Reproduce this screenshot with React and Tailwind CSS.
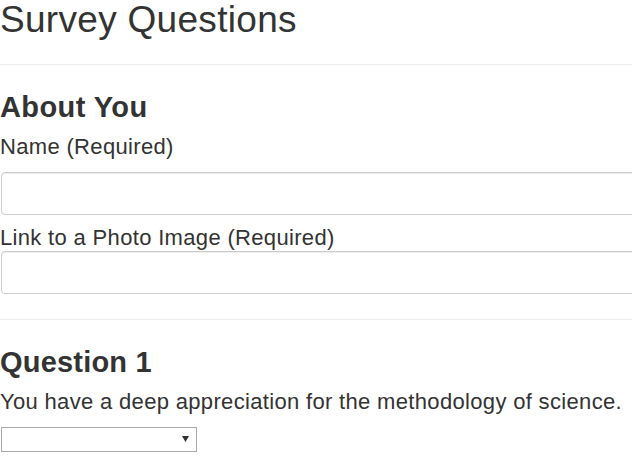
export default function App() {
    return (
        <div className="w-[632px] h-[464px] overflow-hidden bg-white">
            <div className="w-[700px] text-[#333] font-['Liberation_Sans',Arial,sans-serif]">
                <h1 className="text-[37px] leading-[39px] font-normal tracking-[0.3px]">Survey Questions</h1>
                <hr className="mt-[25px] border-0 border-t border-[#eee]"/>

                <h3 className="mt-[26px] text-[29px] leading-[32px] font-bold tracking-[0.4px]">About You</h3>
                <label className="block mt-[12px] text-[22px] leading-[24px] tracking-[0.33px]">Name (Required)</label>
                <input
                    type="text"
                    className="block mt-[13px] ml-px w-[690px] h-[43px] bg-white border border-[#ccc] rounded-[4px] shadow-[inset_0_1px_1px_rgba(0,0,0,0.075)] outline-none"
                />
                <label className="block mt-[11px] text-[22px] leading-[24px] tracking-[0.33px]">Link to a Photo Image (Required)</label>
                <input
                    type="text"
                    className="block mt-px ml-px w-[690px] h-[43px] bg-white border border-[#ccc] rounded-[4px] shadow-[inset_0_1px_1px_rgba(0,0,0,0.075)] outline-none"
                />
                <hr className="mt-[25px] border-0 border-t border-[#eee]"/>

                <h3 className="mt-[26px] text-[29px] leading-[32px] font-bold tracking-[0.2px]">Question 1</h3>
                <p className="mt-[12px] text-[22px] leading-[24px] tracking-[0.33px]">You have a deep appreciation for the methodology of science.</p>
                <div className="relative mt-[13px] ml-px w-[196px] h-[25px]">
                    <select className="block w-full h-full appearance-none bg-white border border-[#a9a9a9] rounded-none outline-none"></select>
                    <svg className="absolute left-[181px] top-[9px] pointer-events-none" width="7" height="6" viewBox="0 0 7 6">
                        <path d="M0 0 H7 L3.5 6 Z" fill="#333"/>
                    </svg>
                </div>
            </div>
        </div>
    )
}
